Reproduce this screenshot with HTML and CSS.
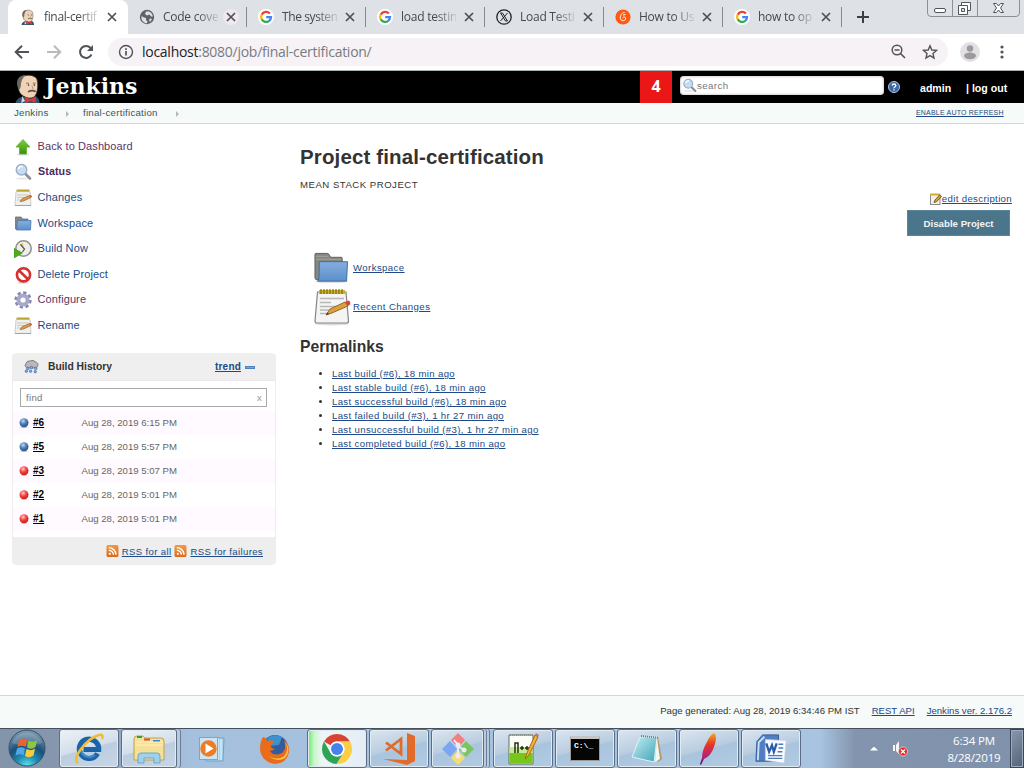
FILE: index.html
```html
<!DOCTYPE html>
<html lang="en">
<head>
<meta charset="utf-8">
<title>final-certification [Jenkins]</title>
<link rel="stylesheet" href="styles.css">
</head>
<body>
<svg class="defs" width="0" height="0" aria-hidden="true">
  <defs>
    <linearGradient id="gGreen" x1="0" y1="0" x2="0" y2="1"><stop offset="0" stop-color="#7bd23a"/><stop offset="1" stop-color="#3b8f0d"/></linearGradient>
    <linearGradient id="gFolder" x1="0" y1="0" x2="0" y2="1"><stop offset="0" stop-color="#86aede"/><stop offset="1" stop-color="#5b8fcc"/></linearGradient>
    <linearGradient id="gOrange" x1="0" y1="0" x2="0" y2="1"><stop offset="0" stop-color="#f09a4a"/><stop offset="1" stop-color="#dd6a1b"/></linearGradient>
    <radialGradient id="gBlueBall" cx=".4" cy=".3" r=".7"><stop offset="0" stop-color="#c3d6ee"/><stop offset=".5" stop-color="#4f80bd"/><stop offset="1" stop-color="#264f8c"/></radialGradient>
    <radialGradient id="gRedBall" cx=".4" cy=".3" r=".7"><stop offset="0" stop-color="#ffc9c9"/><stop offset=".5" stop-color="#f04545"/><stop offset="1" stop-color="#d01515"/></radialGradient>
    <radialGradient id="gOrb" cx=".5" cy="1" r=".95"><stop offset="0" stop-color="#5fe6f5"/><stop offset=".3" stop-color="#2090b4"/><stop offset=".6" stop-color="#1b4f78"/><stop offset="1" stop-color="#7796ad"/></radialGradient>
    <linearGradient id="gNotes" x1="0" y1="0" x2="1" y2="1"><stop offset="0" stop-color="#c5eef3"/><stop offset="1" stop-color="#3fa3b8"/></linearGradient>
    <linearGradient id="gFeather" x1="0" y1="0" x2="0" y2="1"><stop offset="0" stop-color="#f8a81c"/><stop offset=".35" stop-color="#e23a25"/><stop offset=".75" stop-color="#b8207a"/><stop offset="1" stop-color="#3b1b6b"/></linearGradient>
    <symbol id="google" viewBox="0 0 16 16">
      <circle cx="8" cy="8" r="8" fill="#fff"/>
      <g fill="none" stroke-width="2.3">
        <path d="M11.9 4.6A5 5 0 0 0 3.7 5.7" stroke="#ea4335"/>
        <path d="M3.7 5.6A5 5 0 0 0 3.7 10.4" stroke="#fbbc05"/>
        <path d="M3.7 10.3A5 5 0 0 0 11.3 11.8" stroke="#34a853"/>
        <path d="M8.2 8.2H13A5 5 0 0 1 11.2 11.9" stroke="#4285f4"/>
      </g>
    </symbol>
    <symbol id="butler" viewBox="0 0 28 32">
      <path d="M1 32C1 28 5 25 9 24L22 24C25 26 26 28 26 32Z" fill="#35516b"/>
      <path d="M6 6C9 1 20 1 23 6C25 11 24 21 21 24C17 28 9 25 6 21C3 16 3 10 6 6Z" fill="#f0d2b5" stroke="#3a302a" stroke-width=".8"/>
      <path d="M4 16C1 9 3 2 12 2C8 5 6.500 9 6.500 14L5.500 17Z" fill="#6b6966"/>
      <path d="M12 10.500H15M19 10.500H22" stroke="#6d5d50" stroke-width=".8"/>
      <circle cx="14.500" cy="12.500" r=".8" fill="#333"/><circle cx="20.500" cy="12.500" r=".8" fill="#333"/>
      <path d="M18 13L19.500 17" stroke="#b08b6e" fill="none" stroke-width=".8"/>
      <path d="M14 19.500Q18 17 22 19.200" stroke="#594f49" fill="none" stroke-width="1.600"/>
      <path d="M11 24.500L17 27L22 24V31L17 29L11 31.500Z" fill="#d33b3b"/>
      <path d="M8 24L11 29L7 31Z" fill="#cfd9df"/>
    </symbol>
    <symbol id="close" viewBox="0 0 10 10"><path d="M1 1L9 9M9 1L1 9" stroke="#4c5156" stroke-width="1.7"/></symbol>
    <symbol id="magnify" viewBox="0 0 18 18">
      <ellipse cx="8" cy="15.500" rx="6" ry="1" fill="#e6e6e6"/>
      <path d="M11 10.500L16 15.500" stroke="#8d9096" stroke-width="2.6" stroke-linecap="round"/>
      <circle cx="7.500" cy="6.800" r="5.300" fill="#c4ddf7" stroke="#9aabc2" stroke-width="1.300"/>
      <path d="M4.500 6A3.400 3.400 0 0 1 8.500 3.500" stroke="#fff" stroke-width="1.500" fill="none"/>
    </symbol>
    <symbol id="notepad" viewBox="0 0 38 38">
      <ellipse cx="19" cy="36" rx="17" ry="1.5" fill="#ddd"/>
      <path d="M4.500 4H33L35.500 33Q35.500 35 33.500 35H4Q2 35 2 33Z" fill="#f4f4f2" stroke="#858782" stroke-width="1.2"/>
      <path d="M6 2H32V6H6Z" fill="#c9b530"/>
      <path d="M8 1V6M11 1V6M14 1V6M17 1V6M20 1V6M23 1V6M26 1V6M29 1V6" stroke="#6e5c05" stroke-width="1"/>
      <path d="M7 10.500H31M7 14.500H18M7 18.500H28M7 22H16M7 25.500H14" stroke="#b6b8b6" stroke-width="1.300"/>
      <path d="M13 27L17 21L32 14L35 18L19 25Z" fill="#dc9e40" stroke="#80551c" stroke-width=".8"/>
      <path d="M32 14L35.500 12.500Q38 14 37 16.500L35 18Z" fill="#df4035"/>
      <path d="M13 27L14.500 24.500L16 26Z" fill="#333"/>
    </symbol>
    <symbol id="notepad-small" viewBox="0 0 18 18">
      <path d="M2 2.500H16L17 16.500H1Z" fill="#efefed" stroke="#c4c5c1" stroke-width=".8"/>
      <path d="M1 16.500H17" stroke="#a3a4a0"/>
      <path d="M2.500 1.500H15.500" stroke="#bda52c" stroke-width="2"/>
      <path d="M3 6H14M3 8.500H10M3 11H8" stroke="#c3c5c3" stroke-width=".9"/>
      <path d="M6 12.500L8.500 9.500L15.500 6.500L17 8.500L9.500 12Z" fill="#dc9e40" stroke="#80551c" stroke-width=".6"/>
      <path d="M15.500 6.500L17 6L18 7.500L17 8.500Z" fill="#df4035"/>
    </symbol>
    <symbol id="folder" viewBox="0 0 36 32">
      <ellipse cx="18" cy="30" rx="17" ry="1.500" fill="#ddd"/>
      <path d="M1 2Q1 1 2 1H14Q15 1 16 3L17 5H28Q29 5 29 6V28H3Q1 28 1 26Z" fill="#858783" stroke="#5c5e5b"/>
      <path d="M2 4H15M2 7H28" stroke="#a2a4a0"/>
      <path d="M5.500 9.500H34.500L33.500 29.500H3.500Q5 29 5.200 25Z" fill="url(#gFolder)" stroke="#3d6ca5"/>
    </symbol>
    <symbol id="folder-small" viewBox="0 0 18 18">
      <path d="M1.500 2H7L8.500 4H14V14H1.500Z" fill="#858783" stroke="#6c6e6b" stroke-width=".8"/>
      <path d="M3.500 5.500H17L16.500 15H2.500Z" fill="url(#gFolder)" stroke="#4a78b2" stroke-width=".8"/>
    </symbol>
    <symbol id="rss" viewBox="0 0 12 12"><rect width="12" height="12" rx="1.500" fill="url(#gOrange)"/><circle cx="3.300" cy="8.800" r="1.100" fill="#fff"/><path d="M2.300 5.200A4.600 4.600 0 0 1 6.900 9.800M2.300 2.600A7.200 7.200 0 0 1 9.500 9.800" fill="none" stroke="#fff" stroke-width="1.400"/></symbol>
    <symbol id="ball-blue" viewBox="0 0 10 10"><ellipse cx="5" cy="9.200" rx="4" ry=".8" fill="#ccc"/><circle cx="5" cy="4.800" r="4.500" fill="url(#gBlueBall)"/></symbol>
    <symbol id="ball-red" viewBox="0 0 10 10"><ellipse cx="5" cy="9.200" rx="4" ry=".8" fill="#ddd"/><circle cx="5" cy="4.800" r="4.500" fill="url(#gRedBall)"/></symbol>
  </defs>
</svg>

<div class="screen">
  <header class="tabstrip">
    <div class="tab active"><svg class="fav"><use href="#butler"/></svg><span class="title">final-certif</span><svg class="x"><use href="#close"/></svg></div>
    <div class="tab"><svg class="fav" viewBox="0 0 16 16"><circle cx="8" cy="8" r="7.200" fill="#5f6368"/><path d="M2.500 7L5 8.500L7 9V11L8.500 12.500L8 14.300Q4 14 2.500 10ZM7 2.500L6 5L8 6.500L10.500 5.500L12 7.500H13.800Q13.500 4 10 2.400ZM11 9.500L13 10L11 13L10 11Z" fill="#dee1e6"/></svg><span class="title">Code cove</span><span class="halo"><svg class="x"><use href="#close"/></svg></span></div>
    <div class="tab"><svg class="fav"><use href="#google"/></svg><span class="title">The system</span><svg class="x"><use href="#close"/></svg></div>
    <div class="tab"><svg class="fav"><use href="#google"/></svg><span class="title">load testin</span><svg class="x"><use href="#close"/></svg></div>
    <div class="tab"><svg class="fav" viewBox="0 0 16 16"><circle cx="8" cy="8" r="7.200" fill="none" stroke="#202124" stroke-width="1.300"/><path d="M11.500 4L4.500 12M4.500 4H6.500L11.500 12H9.500Z" fill="none" stroke="#202124" stroke-width="1"/></svg><span class="title">Load Testi</span><svg class="x"><use href="#close"/></svg></div>
    <div class="tab"><svg class="fav" viewBox="0 0 16 16"><circle cx="8" cy="8" r="7.600" fill="#ff5a12"/><path d="M9.500 3.500C6 4 5 7 5.400 9.500C5.800 12.300 10 12.400 10.600 10C11 7.800 8 7.200 7.700 9.200M8 6L10.500 5.500" fill="none" stroke="#fff" stroke-width="1"/></svg><span class="title">How to Us</span><svg class="x"><use href="#close"/></svg></div>
    <div class="tab"><svg class="fav"><use href="#google"/></svg><span class="title">how to op</span><svg class="x"><use href="#close"/></svg></div>
    <svg class="plus" viewBox="0 0 12 12"><path d="M6 0V12M0 6H12" stroke="#3c4043" stroke-width="2"/></svg>
    <svg class="wincontrols" viewBox="0 0 94 18"><path d="M.5 0V13Q.5 16.500 4 16.500H89Q92.500 16.500 92.500 13V0M25.500 0V16M50.500 0V16" fill="none" stroke="#8b9096"/><rect x="7.500" y="8.500" width="11" height="4" rx="1.500" fill="#fff" stroke="#50555b"/><path d="M34.500 2.500H43.500V10.500H34.500Z" fill="#fff" stroke="#50555b"/><path d="M31.500 5.500H40.500V14.500H31.500Z" fill="#fff" stroke="#50555b"/><path d="M34.500 8.500H37.500V11.500H34.500Z" fill="#dee1e6" stroke="#50555b"/><path d="M66.500 3.500H69.500L71.500 6L73.500 3.500H76.500L73.500 8L76.500 12.500H73.500L71.500 10L69.500 12.500H66.500L69.500 8Z" fill="#fff" stroke="#50555b"/></svg>
  </header>

  <div class="toolbar">
    <svg class="nav" viewBox="0 0 16 16"><path d="M15 8H2M8 1.700L1.700 8L8 14.300" fill="none" stroke="#505458" stroke-width="2"/></svg>
    <svg class="nav" viewBox="0 0 16 16"><path d="M1 8H14M8 1.700L14.300 8L8 14.300" fill="none" stroke="#b9bbbe" stroke-width="2"/></svg>
    <svg class="nav" viewBox="0 0 16 16"><path d="M13.500 10.500A6 6 0 1 1 12.600 4" fill="none" stroke="#505458" stroke-width="2"/><path d="M15 1V7H9Z" fill="#505458"/></svg>
    <div class="omnibox">
      <svg class="info" viewBox="0 0 16 16"><circle cx="8" cy="8" r="6.500" fill="none" stroke="#505458" stroke-width="1.400"/><path d="M8 7V11.500M8 4.200V5.900" stroke="#505458" stroke-width="1.700"/></svg>
      <span class="url"><b>localhost</b>:8080/job/final-certification/</span>
      <svg class="zoomout" viewBox="0 0 15 15"><circle cx="6" cy="6" r="4.800" fill="none" stroke="#505458" stroke-width="1.500"/><path d="M3.500 6H8.500M9.500 9.500L14 14" stroke="#505458" stroke-width="1.600"/></svg>
      <svg class="star" viewBox="0 0 16 16"><path d="M8 1.800L9.800 6L14.500 6.400L11 9.500L12 14L8 11.600L4 14L5 9.500L1.500 6.400L6.200 6Z" fill="none" stroke="#505458" stroke-width="1.400"/></svg>
    </div>
    <svg class="avatar" viewBox="0 0 20 20"><circle cx="10" cy="10" r="10" fill="#e3dfe2"/><circle cx="10" cy="6.500" r="3.200" fill="#9c9a9c"/><ellipse cx="10" cy="13.800" rx="6" ry="3.400" fill="#9c9a9c"/></svg>
    <svg class="dots" viewBox="0 0 4 14"><g fill="#505458"><circle cx="2" cy="2" r="1.600"/><circle cx="2" cy="7" r="1.600"/><circle cx="2" cy="12" r="1.600"/></g></svg>
  </div>

  <div class="jhead">
    <svg class="logo"><use href="#butler"/></svg><span class="brand">Jenkins</span>
    <span class="alerts">4</span>
    <div class="search"><svg class="mag"><use href="#magnify"/></svg><span>search</span></div>
    <svg class="help" viewBox="0 0 12 12"><circle cx="6" cy="6" r="5.500" fill="#3a67a5" stroke="#b3c5df"/><path d="M4.200 4.600Q4.300 3 6 3T7.800 4.600Q7.700 5.400 6.800 6T6 7.300M6 8.300V9.600" fill="none" stroke="#fff" stroke-width="1.300"/></svg>
    <a class="user">admin</a><a class="logout">| log out</a>
  </div>
  <nav class="crumbs"><a>Jenkins</a><i></i><a class="c2">final-certification</a><i></i><a class="auto">ENABLE AUTO REFRESH</a></nav>

  <div class="page">
    <aside class="side">
      <ul class="tasks">
        <li><svg viewBox="0 0 18 18"><ellipse cx="9" cy="16.500" rx="6" ry="1" fill="#ddd"/><path d="M9 1.500L16 9H12.500V16H5.500V9H2Z" fill="url(#gGreen)" stroke="#5cae2e" stroke-width=".8"/></svg><a class="visited">Back to Dashboard</a></li>
        <li><svg><use href="#magnify"/></svg><a class="visited bold">Status</a></li>
        <li><svg><use href="#notepad-small"/></svg><a>Changes</a></li>
        <li><svg><use href="#folder-small"/></svg><a>Workspace</a></li>
        <li><svg viewBox="0 0 18 18"><circle cx="9.500" cy="8.500" r="7.700" fill="#eeeeec" stroke="#91928e" stroke-width="1.600"/><path d="M10 9L5.500 4.500L9 2.800Z" fill="#f1cb4c"/><path d="M6.500 4.500L10.500 9L8.500 12" fill="none" stroke="#555" stroke-width="1.200"/><path d="M0 8.500L8.500 13L0 18Z" fill="#4fae18" stroke="#38850e" stroke-width=".6"/></svg><a>Build Now</a></li>
        <li><svg viewBox="0 0 18 18"><ellipse cx="9" cy="16.800" rx="6" ry="1" fill="#ddd"/><circle cx="9.500" cy="8.800" r="6.600" fill="#fff" stroke="#d9302e" stroke-width="2.600"/><path d="M5 4.500L14 13.200" stroke="#d9302e" stroke-width="2.600"/></svg><a>Delete Project</a></li>
        <li><svg viewBox="0 0 18 18"><circle cx="9" cy="9" r="7.200" fill="none" stroke="#8387ad" stroke-width="3" stroke-dasharray="3.100 2.555"/><circle cx="9" cy="9" r="4.600" fill="#fff" stroke="#a5a9cb" stroke-width="4"/></svg><a class="visited">Configure</a></li>
        <li><svg><use href="#notepad-small"/></svg><a>Rename</a></li>
      </ul>
      <section class="history">
        <div class="hhead"><svg viewBox="0 0 16 16"><path d="M2.500 9Q0 7 2 5Q3 1.500 7 2Q10 .5 12 3Q16 4 14.500 8Q14 9.500 12 9.500H4Z" fill="#b9b9b7" stroke="#777a77"/><g fill="#8cacdc" stroke="#4770ac" stroke-width=".8"><circle cx="4" cy="10" r="1.400"/><circle cx="8" cy="9" r="1.400"/><circle cx="12.500" cy="10" r="1.400"/><circle cx="2.500" cy="13" r="1.300"/><circle cx="7" cy="13" r="1.300"/><circle cx="12" cy="13.500" r="1.300"/></g></svg><span class="ht">Build History</span><a class="trend">trend</a><b class="bar"></b></div>
        <div class="find"><span>find</span><em>x</em></div>
        <div class="row odd"><svg><use href="#ball-blue"/></svg><a>#6</a><span>Aug 28, 2019 6:15 PM</span></div>
        <div class="row"><svg><use href="#ball-blue"/></svg><a>#5</a><span>Aug 28, 2019 5:57 PM</span></div>
        <div class="row odd"><svg><use href="#ball-red"/></svg><a>#3</a><span>Aug 28, 2019 5:07 PM</span></div>
        <div class="row"><svg><use href="#ball-red"/></svg><a>#2</a><span>Aug 28, 2019 5:01 PM</span></div>
        <div class="row odd"><svg><use href="#ball-red"/></svg><a>#1</a><span>Aug 28, 2019 5:01 PM</span></div>
        <div class="hfoot"><svg><use href="#rss"/></svg><a class="all">RSS for all</a><svg><use href="#rss"/></svg><a class="fail">RSS for failures</a></div>
      </section>
    </aside>

    <main class="main">
      <h1>Project final-certification</h1>
      <div class="desc">MEAN STACK PROJECT</div>
      <div class="edit"><svg viewBox="0 0 12 12"><rect x=".5" y="1.500" width="9.500" height="10" fill="#f3f1e7" stroke="#8c8d87"/><path d="M0 1.500H10" stroke="#d3ad2a" stroke-width="2"/><path d="M4 9.500L5 7L9.500 2L11.500 3.500L6.500 8.800Z" fill="#d89b37" stroke="#684a1d" stroke-width=".8"/></svg><a>edit description</a></div>
      <button class="disable">Disable Project</button>
      <div class="big b1"><svg class="fold"><use href="#folder"/></svg><a>Workspace</a></div>
      <div class="big b2"><svg class="pad"><use href="#notepad"/></svg><a class="rc">Recent Changes</a></div>
      <h2>Permalinks</h2>
      <ul class="perma">
        <li><a>Last build (#6), 18 min ago</a></li>
        <li><a>Last stable build (#6), 18 min ago</a></li>
        <li><a>Last successful build (#6), 18 min ago</a></li>
        <li><a>Last failed build (#3), 1 hr 27 min ago</a></li>
        <li><a>Last unsuccessful build (#3), 1 hr 27 min ago</a></li>
        <li><a>Last completed build (#6), 18 min ago</a></li>
      </ul>
    </main>
  </div>

  <footer class="foot"><span>Page generated: Aug 28, 2019 6:34:46 PM IST</span><a>REST API</a><a>Jenkins ver. 2.176.2</a></footer>

  <div class="taskbar">
    <svg class="orb" viewBox="0 0 38 38"><circle cx="19" cy="19" r="18" fill="url(#gOrb)" stroke="#34526b"/><path d="M4 14A16 16 0 0 1 34 14Q19 20 4 14Z" fill="#fff" opacity=".18"/><path d="M11 11Q15 8 19 11L17.500 18Q14 15.500 9.500 18Z" fill="#f0622c"/><path d="M20.500 11.500Q25 14 29 11L27.500 18Q23 21 19 18.500Z" fill="#8fc63c"/><path d="M9 19.500Q13 17 17 19.500L15.500 26.500Q12 24 7.500 26.500Z" fill="#4fa8e8"/><path d="M18.500 20Q23 22.500 27 19.500L25.500 26.500Q21 29.500 17 27Z" fill="#fccb3d"/></svg>
    <div class="tb ie"><svg viewBox="0 0 32 32"><path d="M24.500 20.500A9.700 9.700 0 1 1 25.700 16.500H10.500" fill="none" stroke="#1d63a8" stroke-width="5.200"/><path d="M22 22A8.500 8.500 0 0 1 8 17" fill="none" stroke="#3b8ed2" stroke-width="2"/><path d="M5 30Q0 27 8 16Q16 5 26 2Q31 1 29 6" fill="none" stroke="#f2bd2c" stroke-width="2.500"/></svg></div>
    <div class="tb ex"><svg viewBox="0 0 32 32"><path d="M1 6Q1 3 4 3H10L12 5H28Q31 5 31 8V27H1Z" fill="#f5e09a" stroke="#c6a045"/><path d="M4 4H9" stroke="#27a34a" stroke-width="2"/><path d="M11 6.500H17" stroke="#d55331" stroke-width="2"/><path d="M20 8H27" stroke="#3b86d6" stroke-width="2"/><path d="M2 12H30M2 9H30" stroke="#fff1b8"/><path d="M5 30V23Q5 20 8 20H24Q27 20 27 23V30H21V25H11V30Z" fill="#9fd1ec" stroke="#6da8cb"/></svg></div>
    <div class="bare mp"><svg viewBox="0 0 32 32"><path d="M7 5H28L27 28H10Z" fill="#a9d2ea" stroke="#6ba6cc"/><path d="M22 5V27M25 6V27" stroke="#e9f6fc"/><rect x="3.500" y="4.500" width="18" height="22" fill="#cbe5f3" stroke="#73abcd"/><circle cx="12.500" cy="15.500" r="8.200" fill="#f07c22"/><path d="M9.500 10.500L17.500 15.500L9.500 20.500Z" fill="#fff"/></svg></div>
    <div class="bare ff"><svg viewBox="0 0 32 32"><circle cx="16" cy="15" r="13" fill="#315d9e"/><path d="M8 5Q15 0 23 4L20 12L11 13Z" fill="#3f91cb"/><path d="M4 4Q6 4 9 8Q13 6 15 9L12 12Q11 15 16 16Q13 18 11 18Q15 24 23 20Q28 16 25 7Q31 12 30 19Q28 30 16 31Q3 29 1 17Q1 8 4 4Z" fill="#e96c1d"/><path d="M26 9Q31 18 24 24Q16 28 9 22Q17 30 26 25Q33 17 26 9Z" fill="#fac538"/></svg></div>
    <div class="tb ch"><svg viewBox="0 0 32 32"><path d="M16 1A15 15 0 0 1 29 8.500H16A7.500 7.500 0 0 0 9.500 12.300L3 8.500A15 15 0 0 1 16 1Z" fill="#d94335"/><path d="M29 8.500A15 15 0 0 1 15.500 31L22.500 19.800A7.500 7.500 0 0 0 16 8.500Z" fill="#fdce45"/><path d="M3 8.500A15 15 0 0 0 15.500 31L22.500 19.800A7.500 7.500 0 0 1 9.500 19.800Z" fill="#2fa356"/><circle cx="16" cy="16" r="7.500" fill="#fff"/><circle cx="16" cy="16" r="6" fill="#4482ee"/></svg></div>
    <div class="tb vs"><svg viewBox="0 0 32 32"><path d="M24 0L32 3V28L24 32L0 26L24 27Z" fill="#e16b2a"/><path d="M3 9.500L18 21V6L3 17.500" fill="none" stroke="#e16b2a" stroke-width="2.800"/></svg></div>
    <div class="tb git"><svg viewBox="0 0 32 32"><path d="M16 0L23 7L16 15L9 7Z" fill="#f47f7f"/><path d="M8 8L15 16L8 24L0 16Z" fill="#7aa7f2"/><path d="M24 8L32 16L24 24L17 16Z" fill="#7bc65a"/><path d="M16 17L23 25L16 32L9 25Z" fill="#f6dc74"/><path d="M12 7L16 12V23M16 13L22 17" stroke="#e8eef8" stroke-width="2" fill="none"/><g fill="#e8eef8"><circle cx="16" cy="12" r="2.500"/><circle cx="16" cy="23" r="2.500"/><circle cx="22" cy="17" r="2.500"/></g></svg></div>
    <div class="tb np"><svg viewBox="0 0 32 32"><path d="M2 2H26V31H2Z" fill="#fbfdf8" stroke="#65705d"/><path d="M2.500 20H25.500V30.500H2.500Z" fill="#76c71a"/><path d="M2.500 14H25.500V20H2.500Z" fill="#c5ec93"/><path d="M3 2H26" stroke="#8b938b" stroke-width="2" stroke-dasharray="1 1"/><path d="M8 20V10H11V20M13 15H17M15 13V17M18 15H22M20 13V17" stroke="#233012" stroke-width="1.500" fill="none"/><path d="M18 26L20 20L28 2L31 4L22 22Z" fill="#f1b337" stroke="#a86618"/><path d="M28 2L29 0L32 2L31 4Z" fill="#cf7070"/></svg></div>
    <div class="tb cmd"><div class="console"><span>C:\_</span></div></div>
    <div class="tb nt"><svg viewBox="0 0 32 32"><path d="M27 4L31 26L27 29L22 8Z" fill="#b79662"/><path d="M9 4L26 5L23 29L1 24Z" fill="url(#gNotes)" stroke="#dff4f6"/><path d="M10 3L28 5" stroke="#637d82" stroke-width="2" stroke-dasharray="1 1"/><path d="M26 5L29 26L24 29Z" fill="#eff8f8"/></svg></div>
    <div class="tb fe"><svg viewBox="0 0 32 32"><path d="M21 0Q25 3 21 14Q18 23 11 26L8 32L7 31L9 25Q9 17 14 9Q17 2 21 0Z" fill="url(#gFeather)"/></svg></div>
    <div class="tb wd"><svg viewBox="0 0 34 32"><path d="M8 1H25V29H1L2 8Z" fill="#527dc0" stroke="#315a9b"/><path d="M10 3L4 9L3 28" stroke="#c9dff5" stroke-width="2" fill="none"/><path d="M11 6L33 7L31 31L11 28Z" fill="#f7faff" stroke="#c8d1dd" stroke-width=".7"/><path d="M12 10L15 19L18 12L20 19L23 10" fill="none" stroke="#2a5caa" stroke-width="2.400"/><path d="M25 11H30M25 15H30M24 19H29M14 23H29M14 26H29" stroke="#4d78ba" stroke-width="1.500"/></svg></div>
    <div class="tray"><i class="up"></i>
      <svg class="vol" viewBox="0 0 16 16"><path d="M1 4H3V10H1ZM4 4L7 0V13L4 10Z" fill="#f4f6f8"/><circle cx="11" cy="10.500" r="4.500" fill="#dc2f2f" stroke="#f9dada" stroke-width=".7"/><path d="M9 8.500L13 12.500M13 8.500L9 12.500" stroke="#fff" stroke-width="1.300"/></svg>
      <div class="clock"><span>6:34 PM</span><span>8/28/2019</span></div><b class="peek"></b></div>
  </div>
</div>
</body>
</html>
```
FILE: styles.css
```css
* { box-sizing: border-box; }
body { margin: 0; background: #fff; color: #333; font-family: "Liberation Sans", Arial, sans-serif; }
.defs { position: absolute; }
.screen { width: 1024px; height: 768px; overflow: hidden; display: flex; flex-direction: column; }
svg { flex: none; display: block; }
a { color: #204a87; }
ul { list-style: none; margin: 0; padding: 0; }

/* Browser chrome */
.tabstrip { height: 34px; background: #dee1e6; display: flex; padding-left: 8px; flex: none; font-family: "Open Sans", "Noto Sans", sans-serif; }
.tab { width: 119px; height: 34px; display: flex; align-items: center; padding-left: 11px; position: relative; }
.tab:not(.active)::after { content: ""; position: absolute; right: 0; top: 7px; width: 1px; height: 20px; background: #86898d; }
.tab.active { width: 120px; background: #fff; border-radius: 8px 8px 0 0; padding-left: 12px; }
.fav { width: 16px; height: 16px; }
.title { width: 55px; margin-left: 8px; white-space: nowrap; font-size: 12px; letter-spacing: -.25px; line-height: 18px; color: #45494d; -webkit-mask-image: linear-gradient(90deg, #000 62%, rgba(0,0,0,.15)); mask-image: linear-gradient(90deg, #000 62%, rgba(0,0,0,.15)); }
.active .title { letter-spacing: -.35px; }
.tab:nth-child(3) .title { letter-spacing: -.4px; }
.x { width: 10px; height: 10px; margin-left: 8px; }
.halo { width: 16px; height: 16px; margin-left: 5px; border-radius: 50%; background: #f0e8ee; display: flex; align-items: center; justify-content: center; }
.halo .x { margin: 0; }
.plus { width: 12px; height: 12px; margin: 11px 0 0 15px; }
.wincontrols { width: 94px; height: 18px; margin-left: 58px; }
.toolbar { height: 37px; flex: none; display: flex; align-items: center; padding: 0 0 1px 14px; border-bottom: 1px solid #a9b0ae; font-family: "Open Sans", "Noto Sans", sans-serif; }
.nav { width: 16px; height: 16px; margin-right: 16px; }
.omnibox { width: 840px; height: 28px; margin-left: -2px; border-radius: 14px; background: #f7f2f6; display: flex; align-items: center; padding-left: 10px; }
.info { width: 16px; height: 16px; }
.url { width: 749px; margin-left: 8px; font-size: 14px; letter-spacing: -.27px; line-height: 20px; color: #777b80; }
.url b { color: #202124; font-weight: 400; }
.zoomout { width: 15px; height: 15px; }
.star { width: 16px; height: 16px; margin-left: 16px; }
.avatar { width: 20px; height: 20px; margin-left: 12px; }
.dots { width: 4px; height: 14px; margin-left: 20px; }

/* Jenkins header */
.jhead { height: 32px; flex: none; background: #000; color: #fff; display: flex; }
.logo { width: 28px; height: 31px; margin: 2px 0 0 14px; }
.brand { width: 598px; padding-left: 3px; font: bold 22px/30px "DejaVu Serif", "Liberation Serif", serif; }
.alerts { width: 32px; background: #eb1717; text-align: center; font: bold 16px/31px "Open Sans", sans-serif; }
.search { width: 204px; height: 19px; margin: 5px 0 0 8px; border-radius: 4px; background: #fff; box-shadow: inset 0 0 3px #aaa; display: flex; align-items: center; padding-left: 2px; font-size: 9.700px; color: #777; letter-spacing: .4px; }
.mag { width: 15px; height: 15px; }
.help { width: 12px; height: 12px; margin: 10px 0 0 4px; }
.jhead a { color: #fff; font: bold 10.600px/13px "Liberation Sans", sans-serif; padding-top: 11px; white-space: nowrap; }
.user { margin-left: 20px; width: 46px; }
.crumbs { height: 21px; flex: none; background: #f6faf8; border-bottom: 1px solid #d3d7cf; display: flex; padding-left: 14px; font-size: 9.700px; line-height: 20px; }
.crumbs a { color: #40545f; letter-spacing: .25px; width: 52px; white-space: nowrap; }
.crumbs i { width: 3px; height: 6px; margin: 8px 0 0; background: #b8b8b8; clip-path: polygon(0 0, 100% 50%, 0 100%); }
.crumbs .c2 { width: 93px; margin-left: 14px; letter-spacing: .25px; }
.crumbs .auto { margin-left: auto; width: 108px; font-size: 7px; color: #204a87; text-decoration: underline; letter-spacing: .2px; }

/* Page body */
.page { height: 571px; flex: none; display: flex; }
.side { width: 300px; padding: 10px 0 0 12px; }
.tasks li { height: 25.600px; display: flex; align-items: center; font-size: 11px; }
.tasks li svg { width: 18px; height: 18px; margin: 0 5.500px 0 2px; }
.tasks a { letter-spacing: .1px; line-height: 14px; padding-bottom: 2px; }
.tasks .visited { color: #5c3566; }
.tasks .bold { color: #4c2b5c; font-weight: bold; font-size: 10.700px; padding-left: .5px; }
.history { width: 264px; margin-top: 14px; border: 1px solid #f2ecf0; border-radius: 4px; overflow: hidden; font-size: 9.600px; }
.hhead { height: 27px; background: #efefef; display: flex; align-items: center; font-size: 10.300px; font-weight: bold; padding-left: 11px; border-bottom: 1px solid #eee7eb; }
.hhead svg { width: 15px; height: 15px; }
.ht { width: 176px; padding-left: 9px; }
.trend { text-decoration: underline; width: 30px; font-size: 10px; letter-spacing: .2px; }
.bar { width: 10px; height: 3px; margin-top: 1px; background: #7ba1d5; border: 1px solid #527fbd; }
.find { width: 247px; height: 19px; margin: 7px 0 4px 7px; border: 1px solid #aaa; display: flex; justify-content: space-between; align-items: center; padding: 0 4px 0 5px; color: #777; letter-spacing: .3px; }
.find em { font-style: normal; color: #999; }
.row { height: 24px; display: flex; align-items: center; padding: 0 0 0 6px; }
.row.odd { background: #fefaff; }
.row svg { width: 10px; height: 10px; margin-right: 4px; }
.row a { width: 48px; color: #000; font-size: 10px; font-weight: bold; text-decoration: underline; padding-bottom: 1px; }
.row span { color: #666; padding-left: .500px; }
.hfoot { height: 27px; margin-top: 6px; padding-top: 2px; background: #eee; display: flex; align-items: center; justify-content: flex-end; padding-right: 12px; }
.hfoot svg { width: 13px; height: 12px; margin: 0 3px; }
.hfoot a { text-decoration: underline; letter-spacing: .34px; }
.main { width: 712px; display: flex; flex-direction: column; font-size: 9.600px; color: #333; }
.main a { text-decoration: underline; letter-spacing: .35px; white-space: nowrap; }
h1 { margin: 20px 0 0; font-size: 20.500px; line-height: 26px; letter-spacing: .13px; }
.desc { margin-top: 8px; line-height: 14px; letter-spacing: .5px; }
.edit { margin-top: 0; line-height: 14px; display: flex; justify-content: flex-end; align-items: center; }
.edit svg { width: 12px; height: 12px; }
.disable { width: 103px; height: 26px; margin: 4px 2px 0 auto; padding: 0; border: 1px solid #5b879e; background: #4b758b; color: #f4f4f4; font: bold 9.700px "Liberation Sans", sans-serif; }
.big { display: flex; align-items: center; padding-left: 14px; }
.big a { padding-bottom: 2px; letter-spacing: .42px; }
.b1 { height: 32px; margin-top: 16px; }
.b2 { height: 38px; margin-top: 4px; }
.fold { width: 35px; height: 32px; margin-right: 4px; }
.pad { width: 38px; height: 38px; margin: 0 3px 0 -1px; }
.pad + a { margin-left: -1px; }
h2 { margin: 11px 0 0; font-size: 15.700px; line-height: 20px; }
.perma { margin-top: 10px; padding-left: 32px; list-style: disc; }
.perma li { height: 14px; line-height: 14px; }
.foot { height: 33px; flex: none; border-top: 1px solid #d3d7cf; background: #f6faf8; display: flex; justify-content: flex-end; gap: 12px; padding-right: 12px; font-size: 9.600px; line-height: 30px; }
.foot a { text-decoration: underline; }

/* Windows taskbar */
.taskbar { height: 40px; flex: none; border-top: 1px solid #46505c; background: linear-gradient(90deg, #8293aa 0, #8596ad 55px, #a5c0dd 190px, #a8c4e0 820px, #8395ae 855px, #8092ab 100%); display: flex; font-family: "Open Sans", "Noto Sans", sans-serif; }
.orb { width: 38px; height: 38px; margin: 0 13px 0 8px; }
.tb { width: 60px; height: 39px; margin-right: 2px; border: 1px solid #5b6e86; border-radius: 3px; background: linear-gradient(165deg, #dbe5ef 0, #b9cde0 48%, #a9c4dd 52%, #b1cbe2); box-shadow: inset 0 0 0 1px #e1ebf4; display: flex; align-items: center; justify-content: center; }
.tb svg, .bare svg { width: 32px; height: 32px; }
.ie, .ex { background: linear-gradient(165deg, #eef2f6 0, #d2deea 48%, #bccde0 52%, #c6d6e6); }
.ex { width: 56px; margin-right: 3px; box-shadow: inset 0 0 0 1px #e1ebf4, 3px 0 0 #b8cadd, 4px 0 0 #6b7d94; }
.bare { width: 64px; display: flex; align-items: center; justify-content: center; }
.mp { margin-left: 1px; padding-right: 2px; }
.ff { width: 62px; padding-right: 2px; }
.ch { background: linear-gradient(90deg, #65e765 0, #c8f6ca 6px, #eef5f5 14px, #e4edf6); }
.git { width: 53px; margin-right: 9px; box-shadow: inset 0 0 0 1px #e1ebf4, 2px 0 0 #b8cadd, 3px 0 0 #6b7d94, 5px 0 0 #b8cadd, 6px 0 0 #6b7d94; }
.console { width: 30px; height: 25px; background: #050505; border: 1px solid #9a9a9a; border-top: 3px solid #c5c5c5; color: #fff; font: bold 8px/14px "Liberation Mono", monospace; padding-left: 3px; }
.tray { flex: 1; display: flex; justify-content: flex-end; align-items: center; }
.up { width: 8px; height: 4px; background: #fff; clip-path: polygon(50% 0, 100% 100%, 0 100%); margin-right: 14px; }
.vol { width: 16px; height: 16px; margin-right: 36px; }
.clock { width: 60px; display: flex; flex-direction: column; align-items: center; color: #fff; font-size: 11.500px; letter-spacing: -.15px; line-height: 17px; margin-right: 6px; padding-top: 1px; white-space: nowrap; }
.peek { width: 14px; height: 39px; border: 1px solid #37475a; box-shadow: inset 0 0 0 1px #9baabd; background: linear-gradient(135deg, #8b98aa, #536379); }
```
